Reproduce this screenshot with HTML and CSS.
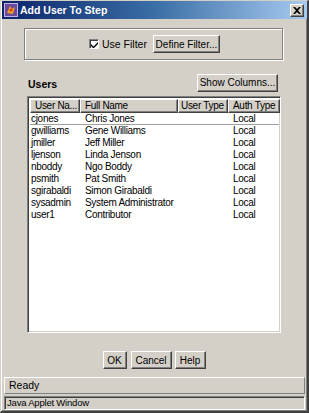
FILE: index.html
```html
<!DOCTYPE html>
<html>
<head>
<meta charset="utf-8">
<link rel="stylesheet" href="styles.css">
</head>
<body>
<div class="window">
  <div class="titlebar">
    <svg class="appicon" width="14" height="14" viewBox="0 0 14 14">
      <rect x="0" y="0" width="14" height="14" fill="#6a4a9a"/>
      <rect x="0.5" y="0.5" width="13" height="13" fill="none" stroke="#c8b0e8"/>
      <path d="M3 10 L6 3 L8 6 L11 4 L9 11 Z" fill="#f0a020"/>
      <circle cx="7" cy="7" r="1.6" fill="#e04010"/>
    </svg>
    <span class="title">Add User To Step</span>
    <span class="close">
      <svg width="8" height="7" viewBox="0 0 8 7"><path d="M0 0h2l2 2l2-2h2l-3 3.5l3 3.5h-2l-2-2l-2 2h-2l3-3.5z" fill="#000"/></svg>
    </span>
  </div>
  <div class="content">
    <div class="filterpanel">
      <span class="check"><svg width="7" height="7" viewBox="0 0 7 7"><path d="M0 3 L2.5 5.5 L7 1 L7 3 L2.5 7.5 L0 5 Z" fill="#000"/></svg></span>
      <span class="checklabel">Use Filter</span>
      <button class="btn btn-define">Define Filter...</button>
    </div>
    <div class="usersrow">
      <span class="userslabel">Users</span>
      <button class="btn btn-show">Show Columns...</button>
    </div>
    <div class="table">
      <div class="thead">
        <div class="th c1">User Na...</div>
        <div class="th c2">Full Name</div>
        <div class="th c3">User Type</div>
        <div class="th c4">Auth Type</div>
      </div>
      <div class="tbody">
        <div class="tr first"><span class="c1">cjones</span><span class="c2">Chris Jones</span><span class="c3"></span><span class="c4">Local</span></div>
        <div class="tr"><span class="c1">gwilliams</span><span class="c2">Gene Williams</span><span class="c3"></span><span class="c4">Local</span></div>
        <div class="tr"><span class="c1">jmiller</span><span class="c2">Jeff Miller</span><span class="c3"></span><span class="c4">Local</span></div>
        <div class="tr"><span class="c1">ljenson</span><span class="c2">Linda Jenson</span><span class="c3"></span><span class="c4">Local</span></div>
        <div class="tr"><span class="c1">nboddy</span><span class="c2">Ngo Boddy</span><span class="c3"></span><span class="c4">Local</span></div>
        <div class="tr"><span class="c1">psmith</span><span class="c2">Pat Smith</span><span class="c3"></span><span class="c4">Local</span></div>
        <div class="tr"><span class="c1">sgirabaldi</span><span class="c2">Simon Girabaldi</span><span class="c3"></span><span class="c4">Local</span></div>
        <div class="tr"><span class="c1">sysadmin</span><span class="c2">System Administrator</span><span class="c3"></span><span class="c4">Local</span></div>
        <div class="tr"><span class="c1">user1</span><span class="c2">Contributor</span><span class="c3"></span><span class="c4">Local</span></div>
      </div>
    </div>
    <div class="actions">
      <button class="btn btn-ok">OK</button>
      <button class="btn btn-cancel">Cancel</button>
      <button class="btn btn-help">Help</button>
    </div>
    <div class="status">Ready</div>
    <div class="applet">Java Applet Window</div>
  </div>
</div>
</body>
</html>
```
FILE: styles.css
```css
* { box-sizing: border-box; }
html, body { margin: 0; padding: 0; background: #d4d0c8; }
body { font-family: "Liberation Sans", Arial, sans-serif; font-size: 10px; color: #000; }

.window {
  width: 309px;
  height: 413px;
  background: #d4d0c8;
  border-style: solid;
  border-width: 1px 2px 2px 1px;
  border-color: #d4d0c8 #404040 #404040 #d4d0c8;
  box-shadow: inset 1px 1px #fff, inset -1px -1px #808080;
  display: flex;
  flex-direction: column;
  padding: 0 0 0 1px;
}

.titlebar {
  height: 18px;
  background: linear-gradient(to right, #0a246a 0%, #3a6ea5 50%, #a6caf0 100%);
  display: flex;
  align-items: center;
  padding: 0 2px 0 2px;
  flex: none;
}
.appicon { flex: none; }
.title {
  color: #fff;
  font-family: "Liberation Sans", Arial, sans-serif;
  font-weight: bold;
  font-size: 10.5px;
  margin-left: 2px;
  flex: 1;
}
.close {
  width: 14px;
  height: 13px;
  background: #d4d0c8;
  border-style: solid;
  border-width: 1px;
  border-color: #fff #404040 #404040 #fff;
  box-shadow: inset -1px -1px #808080;
  display: flex;
  align-items: center;
  justify-content: center;
  margin-right: 1px;
}

.content {
  flex: 1;
  display: flex;
  flex-direction: column;
}

.filterpanel {
  margin: 9px 0 0 22px;
  width: 259px;
  height: 32px;
  border: 1px solid #808080;
  box-shadow: inset 1px 1px #fff, 1px 1px #fff;
  display: flex;
  align-items: center;
  justify-content: center;
  padding-left: 2px;
  flex: none;
}
.check {
  width: 10px;
  height: 10px;
  background: #fff;
  border-style: solid;
  border-width: 1px;
  border-color: #808080 #fff #fff #808080;
  box-shadow: inset 1px 1px #404040;
  display: flex;
  align-items: center;
  justify-content: center;
  padding: 1px 0 0 1px;
}
.checklabel { margin-left: 3px; margin-right: 6px; font-size: 10.5px; }

.btn {
  font-family: "Liberation Sans", Arial, sans-serif;
  font-size: 10px;
  color: #000;
  background: #d4d0c8;
  border-style: solid;
  border-width: 1px;
  border-color: #fff #404040 #404040 #fff;
  box-shadow: inset -1px -1px #808080;
  padding: 0;
  margin: 0;
  height: 18px;
  line-height: 15px;
  text-align: center;
  white-space: nowrap;
}
.btn-define { width: 67px; }
.btn-show { width: 81px; }

.usersrow {
  margin: 14px 0 0 26px;
  width: 250px;
  height: 17px;
  display: flex;
  align-items: center;
  justify-content: space-between;
  flex: none;
}
.userslabel { font-weight: bold; font-size: 10.5px; padding-top: 3px; }

.table {
  margin: 5px 0 0 25px;
  width: 254px;
  height: 237px;
  background: #fff;
  border-style: solid;
  border-width: 1px;
  border-color: #808080 #fff #fff #808080;
  box-shadow: inset 1px 1px #404040, inset -1px -1px #d4d0c8;
  padding: 2px 1px 1px 2px;
  flex: none;
  letter-spacing: -0.3px;
}
.thead { display: flex; height: 14px; }
.th {
  background: #d4d0c8;
  border-style: solid;
  border-width: 1px;
  border-color: #fff #404040 #404040 #fff;
  box-shadow: inset -1px -1px #808080;
  padding: 0 0 0 4px;
  line-height: 12px;
  white-space: nowrap;
  overflow: hidden;
}
.th.c3 { padding-left: 2px; }
.c1 { width: 50px; flex: none; }
.c2 { width: 98px; flex: none; }
.c3 { width: 50px; flex: none; }
.c4 { width: 52px; flex: none; }
.tbody { padding-top: 0; }
.tr { display: flex; height: 12px; line-height: 12px; white-space: nowrap; }
.tr.first { border-bottom: 1px solid #a0a0a0; }
.tr span { padding-left: 1px; overflow: hidden; }
.tr .c2 { padding-left: 5px; }
.tr .c4 { padding-left: 5px; }

.actions {
  margin-top: 18px;
  display: flex;
  justify-content: center;
  gap: 3px;
  padding-right: 1px;
  flex: none;
}
.btn-ok { width: 24px; }
.btn-cancel { width: 41px; margin-left: 1px; }
.btn-help { width: 31px; }

.status {
  margin: 8px 2px 0 2px;
  height: 17px;
  border-style: solid;
  border-width: 1px;
  border-color: #fff #808080 #808080 #fff;
  padding-left: 4px;
  line-height: 15px;
  font-size: 10.5px;
  flex: none;
}
.applet {
  margin: 2px 2px 0 2px;
  height: 14px;
  border-style: solid;
  border-width: 1px;
  border-color: #808080 #fff #fff #808080;
  box-shadow: inset 1px 1px #404040;
  padding-left: 2px;
  line-height: 12px;
  font-size: 9.5px;
  letter-spacing: -0.2px;
  flex: none;
}
```
